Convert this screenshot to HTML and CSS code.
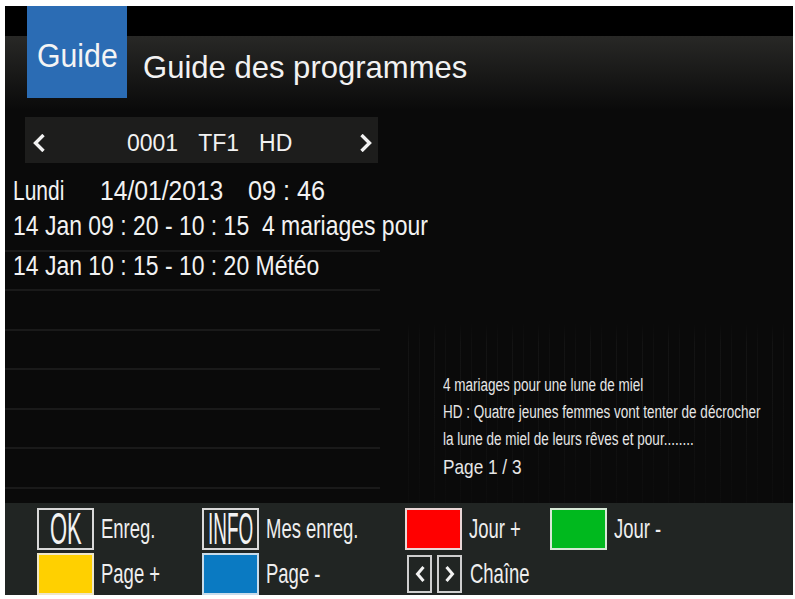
FILE: index.html
```html
<!DOCTYPE html>
<html lang="fr">
<head>
<meta charset="utf-8">
<title>Guide des programmes</title>
<link rel="stylesheet" href="styles.css">
</head>
<body>
<div class="screen">
  <header class="head">
    <div class="tab"><span class="sq tab-text">Guide</span></div>
    <h1 class="title">Guide des programmes</h1>
  </header>
  <main class="main">
    <section class="left">
      <div class="chan">
        <svg class="chev" viewBox="0 0 12 18" width="12" height="18"><path d="M10.5 1 L2.5 9 L10.5 17"/></svg>
        <div class="chan-text"><span>0001</span><span>TF1</span><span>HD</span></div>
        <svg class="chev" viewBox="0 0 12 18" width="12" height="18"><path d="M1.5 1 L9.5 9 L1.5 17"/></svg>
      </div>
      <div class="dayline">
        <span class="cell day"><span class="sq">Lundi</span></span>
        <span class="cell date"><span class="sq">14/01/2013</span></span>
        <span class="cell time"><span class="sq">09 : 46</span></span>
      </div>
      <ul class="list">
        <li class="row"><span class="sq">14 Jan 09 : 20 - 10 : 15&nbsp; 4 mariages pour</span></li>
        <li class="row"><span class="sq">14 Jan 10 : 15 - 10 : 20 Météo</span></li>
        <li class="row"></li>
        <li class="row"></li>
        <li class="row"></li>
        <li class="row"></li>
        <li class="row"></li>
      </ul>
    </section>
    <section class="right">
      <div class="desc-area">
        <p class="desc">4 mariages pour une lune de miel</p>
        <p class="desc">HD : Quatre jeunes femmes vont tenter de décrocher</p>
        <p class="desc">la lune de miel de leurs rêves et pour........</p>
        <p class="desc page">Page 1 / 3</p>
      </div>
    </section>
  </main>
  <footer class="foot">
    <div class="key"><span class="btn"><span class="sq ok">OK</span></span><span class="sq lbl">Enreg.</span></div>
    <div class="key"><span class="btn"><span class="sq info">INFO</span></span><span class="sq lbl">Mes enreg.</span></div>
    <div class="key"><span class="btn red"></span><span class="sq lbl">Jour +</span></div>
    <div class="key"><span class="btn green"></span><span class="sq lbl">Jour -</span></div>
    <div class="key"><span class="btn yellow"></span><span class="sq lbl">Page +</span></div>
    <div class="key"><span class="btn blue"></span><span class="sq lbl">Page -</span></div>
    <div class="key arrows">
      <span class="abtn"><svg viewBox="0 0 10 16" width="10" height="16"><path d="M8.5 1 L2.5 8 L8.5 15"/></svg></span>
      <span class="abtn"><svg viewBox="0 0 10 16" width="10" height="16"><path d="M1.5 1 L7.5 8 L1.5 15"/></svg></span>
      <span class="sq lbl">Chaîne</span>
    </div>
    <div class="key"></div>
  </footer>
</div>
</body>
</html>
```

FILE: styles.css
```css
html, body {
  margin: 0;
  padding: 0;
  background: #ffffff;
}

body {
  font-family: "Liberation Sans", Arial, sans-serif;
  color: #f2f2f2;
}

.screen {
  margin: 6px 0 0 5px;
  width: 788px;
  height: 589px;
  background: #0a0a0a;
  display: flex;
  flex-direction: column;
  overflow: hidden;
}

.sq {
  display: inline-block;
  white-space: nowrap;
  transform: scaleX(var(--sx, 1));
  transform-origin: 0 50%;
}

/* Header */
.head {
  flex: none;
  height: 104px;
  display: flex;
  align-items: flex-start;
  background: linear-gradient(to bottom, #000 0, #000 30px, #282826 30px, #181817 70px, #0a0a0a 104px);
}

.tab {
  flex: none;
  margin-left: 22px;
  width: 100px;
  height: 92px;
  box-sizing: border-box;
  padding-top: 33px;
  background: #2b6cb4;
  text-align: center;
  font-size: 34px;
  line-height: 33px;
}

.tab-text {
  --sx: .89;
  transform-origin: 50% 50%;
  color: #f4f4f4;
}

.title {
  margin: 46px 0 0 16px;
  font-size: 32px;
  line-height: 31px;
  font-weight: normal;
  color: #f2f2f2;
  white-space: nowrap;
  transform: scaleX(.97);
  transform-origin: 0 50%;
}

/* Main */
.main {
  flex: none;
  height: 393px;
  display: flex;
}

.left {
  flex: none;
  width: 375px;
  display: flex;
  flex-direction: column;
}

.chan {
  flex: none;
  margin: 7px 0 0 20px;
  width: 353px;
  height: 46px;
  box-sizing: border-box;
  padding: 0 6px 0 8px;
  background: #1d1d1c;
  display: flex;
  align-items: flex-start;
}

.chev {
  flex: none;
  margin-top: 17px;
}

.chev path {
  fill: none;
  stroke: #f2f2f2;
  stroke-width: 3.4;
}

.abtn path {
  fill: none;
  stroke: #f2f2f2;
  stroke-width: 3;
}

.chan-text {
  flex: 1;
  margin: 15px 0 0 82px;
  display: flex;
  gap: 20px;
  font-size: 23px;
  line-height: 23px;
}

.dayline {
  flex: none;
  height: 49px;
  box-sizing: border-box;
  padding: 14px 0 0 8px;
  display: flex;
  font-size: 28px;
  line-height: 28px;
}

.cell { display: block; flex: none; }
.day { width: 87px; --sx: .75; }
.date { width: 148px; --sx: .88; }
.time { --sx: .9; }
.day .sq, .date .sq, .time .sq { --sx: inherit; }

.list {
  margin: 0;
  padding: 0;
  list-style: none;
}

.row {
  height: 39.5px;
  box-sizing: border-box;
  border-bottom: 2px solid #1a1a1a;
  padding-left: 8px;
  font-size: 28px;
  line-height: 28px;
  --sx: .82;
}

/* Right */
.right {
  flex: 1;
  display: flex;
  flex-direction: column;
  justify-content: flex-end;
}

.desc-area {
  height: 180px;
  box-sizing: border-box;
  padding: 0 0 23px 63px;
  display: flex;
  flex-direction: column;
  justify-content: flex-end;
  background-image:
    linear-gradient(to bottom, #0a0a0a 0, rgba(10,10,10,0) 20px, rgba(10,10,10,0) 70px, rgba(10,10,10,.7) 100%),
    repeating-linear-gradient(90deg, rgba(255,255,255,.04) 0 1px, transparent 1px 11px, rgba(255,255,255,.025) 11px 12px, transparent 12px 26px);
  background-size: calc(100% - 28px) 100%;
  background-position: right top;
  background-repeat: no-repeat;
}

.desc {
  margin: 0;
  font-size: 18px;
  line-height: 27px;
  white-space: nowrap;
  color: #e6e6e6;
  transform: scaleX(.75);
  transform-origin: 0 50%;
}

.desc.page {
  font-size: 21px;
  transform: scaleX(.82);
}

/* Footer */
.foot {
  flex: none;
  height: 92px;
  box-sizing: border-box;
  padding: 5px 0 0 32px;
  background: #212523;
  display: grid;
  grid-template-columns: 165px 203px 145px 1fr;
  grid-template-rows: 42px 42px;
  row-gap: 3px;
}

.key {
  display: flex;
  align-items: center;
  gap: 7px;
}

.btn {
  flex: none;
  width: 57px;
  height: 42px;
  box-sizing: border-box;
  border: 2px solid #d9d9d9;
  display: flex;
  align-items: center;
  justify-content: center;
}

.ok, .info {
  font-size: 44px;
  line-height: 38px;
  transform-origin: 50% 50%;
}
.ok { --sx: .5; margin: 0 -6px; }
.info { --sx: .43; margin: 0 -26px; }

.red { background: #ff0000; border-color: #e9d6d6; }
.green { background: #00b91e; border-color: #d6e9d6; }
.yellow { background: #ffd000; border-color: #eee6c8; }
.blue { background: #0a7ac2; border-color: #c8dcea; }

.lbl {
  font-size: 28px;
  line-height: 28px;
  --sx: .66;
  color: #eeeeee;
}

.arrows {
  gap: 5px;
  padding-left: 2px;
}

.arrows .lbl {
  margin-left: 3px;
}

.abtn {
  flex: none;
  width: 25px;
  height: 38px;
  box-sizing: border-box;
  border: 2px solid #cfcfcf;
  display: flex;
  align-items: center;
  justify-content: center;
}
```
